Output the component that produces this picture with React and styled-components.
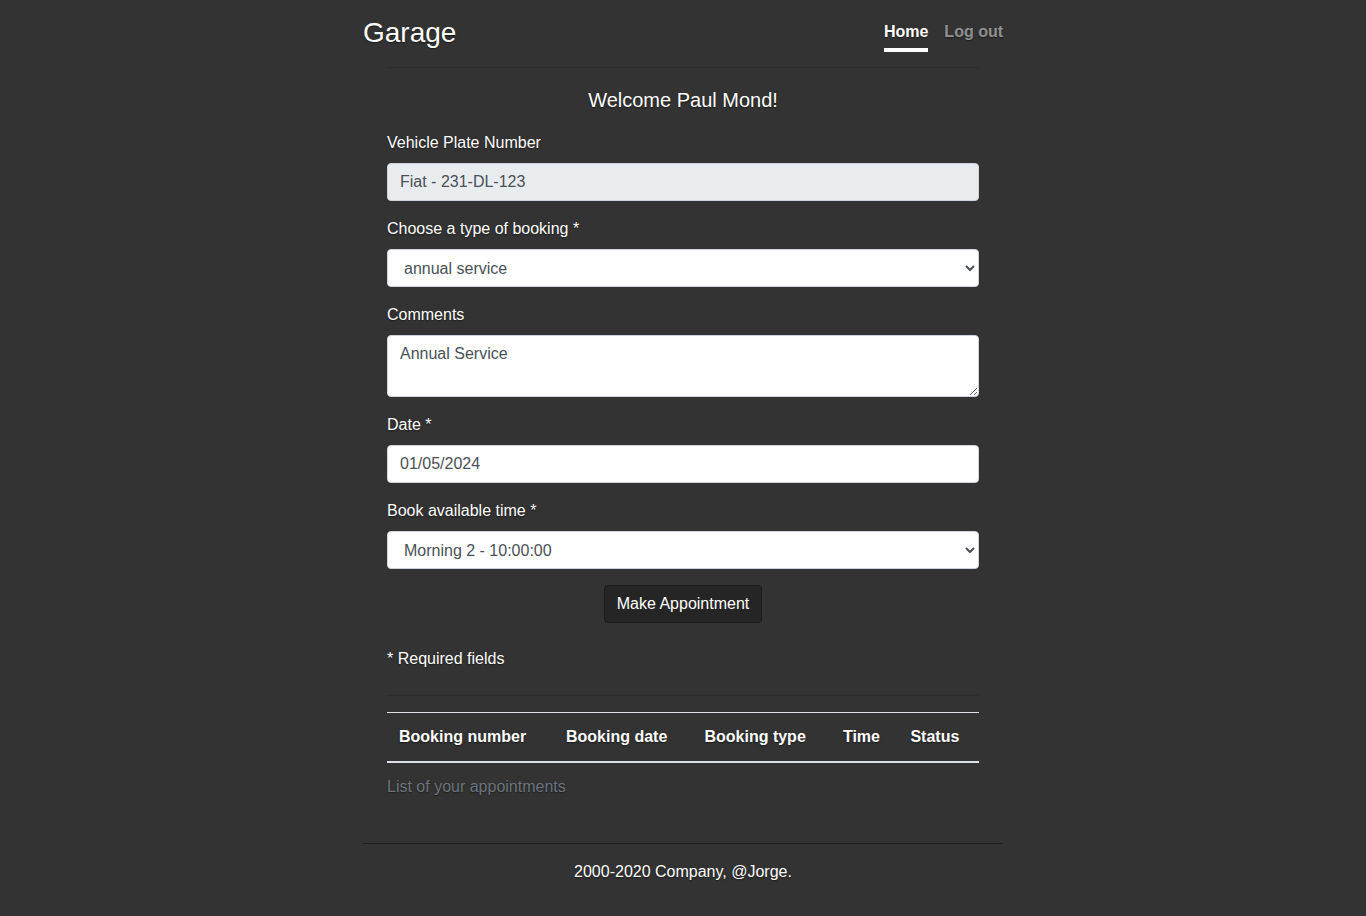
import React, { useState } from "react";
import styled, { createGlobalStyle } from "styled-components";

const GlobalStyle = createGlobalStyle`
  html, body {
    height: 100%;
  }
  body {
    margin: 0;
    background: #333;
    color: #fff;
    font-family: "Liberation Sans", Arial, sans-serif;
    font-size: 16px;
    line-height: 1.5;
    text-shadow: 0 0.05rem 0.1rem rgba(0, 0, 0, 0.5);
  }
  * {
    box-sizing: border-box;
  }
`;

const Cover = styled.div`
  display: flex;
  flex-direction: column;
  max-width: 640px;
  min-height: 100vh;
  margin: 0 auto;
  padding: 16px 0;
`;

const Masthead = styled.header`
  display: flex;
  justify-content: space-between;
  align-items: flex-start;
`;

const Brand = styled.h3`
  margin: 0;
  font-size: 28px;
  font-weight: 400;
  line-height: 1.2;
`;

const Nav = styled.nav`
  display: flex;
`;

const NavLink = styled.a`
  margin-left: 16px;
  padding: 4px 0;
  font-weight: 700;
  text-decoration: none;
  cursor: pointer;
  color: ${props => (props.$active ? "#fff" : "rgba(255, 255, 255, 0.5)")};
  border-bottom: 4px solid ${props => (props.$active ? "#fff" : "transparent")};
`;

const Main = styled.main`
  padding: 0 24px;
`;

const Rule = styled.hr`
  margin: ${props => props.$margin || "16px 0"};
  border: 0;
  border-top: 1px solid rgba(0, 0, 0, 0.1);
`;

const Welcome = styled.h5`
  margin: 20px 0 19px;
  font-size: 20px;
  font-weight: 400;
  line-height: 24px;
  text-align: center;
`;

const FormGroup = styled.div`
  margin-bottom: 16px;
`;

const Label = styled.label`
  display: block;
  margin-bottom: 8px;
`;

const controlStyles = `
  display: block;
  width: 100%;
  padding: 6px 12px;
  font-family: "Liberation Sans", Arial, sans-serif;
  font-size: 16px;
  line-height: 1.5;
  color: #495057;
  background: #fff;
  border: 1px solid #ced4da;
  border-radius: 4px;
  outline: none;
`;

const Input = styled.input`
  ${controlStyles}
  height: 38px;
  background: ${props => (props.readOnly ? "#e9ecef" : "#fff")};
`;

const Select = styled.select`
  ${controlStyles}
  height: 38px;
`;

const TextArea = styled.textarea`
  ${controlStyles}
  resize: vertical;
`;

const ButtonRow = styled.div`
  display: flex;
  justify-content: center;
  margin-bottom: 24px;
`;

const Button = styled.button`
  padding: 6px 12px;
  font-family: "Liberation Sans", Arial, sans-serif;
  font-size: 16px;
  line-height: 1.5;
  color: #fff;
  background: #252525;
  border: 1px solid #1b1b1b;
  border-radius: 4px;
  cursor: pointer;
`;

const Note = styled.p`
  margin: 0 0 24px;
`;

const Table = styled.table`
  width: 100%;
  border-collapse: collapse;
  margin-bottom: 16px;
`;

const Caption = styled.caption`
  caption-side: bottom;
  padding: 12px 0;
  color: #6c757d;
  text-align: left;
`;

const Th = styled.th`
  padding: 12px;
  text-align: left;
  vertical-align: bottom;
  border-top: 1px solid #dee2e6;
  border-bottom: 2px solid #dee2e6;
`;

const Footer = styled.footer`
  margin-top: auto;
  padding: 16px 0 16px;
  border-top: 1px solid #1f1f1f;
  text-align: center;
`;

const FooterText = styled.p`
  margin: 0;
`;

const columns = ["Booking number", "Booking date", "Booking type", "Time", "Status"];

const App = () => {
  const [booking, setBooking] = useState("annual service");
  const [comments, setComments] = useState("Annual Service");
  const [date, setDate] = useState("01/05/2024");
  const [time, setTime] = useState("Morning 2 - 10:00:00");

  return (
    <>
      <GlobalStyle />
      <Cover>
        <Masthead>
          <Brand>Garage</Brand>
          <Nav>
            <NavLink $active>Home</NavLink>
            <NavLink>Log out</NavLink>
          </Nav>
        </Masthead>

        <Main>
          <Rule $margin="15px 0 0" />
          <Welcome>Welcome Paul Mond!</Welcome>

          <form onSubmit={e => e.preventDefault()}>
            <FormGroup>
              <Label>Vehicle Plate Number</Label>
              <Input readOnly value="Fiat - 231-DL-123" />
            </FormGroup>
            <FormGroup>
              <Label>Choose a type of booking *</Label>
              <Select value={booking} onChange={e => setBooking(e.target.value)}>
                <option>annual service</option>
                <option>major service</option>
                <option>repair / fault</option>
                <option>major repair</option>
              </Select>
            </FormGroup>
            <FormGroup>
              <Label>Comments</Label>
              <TextArea rows={2} value={comments} onChange={e => setComments(e.target.value)} />
            </FormGroup>
            <FormGroup>
              <Label>Date *</Label>
              <Input value={date} onChange={e => setDate(e.target.value)} />
            </FormGroup>
            <FormGroup>
              <Label>Book available time *</Label>
              <Select value={time} onChange={e => setTime(e.target.value)}>
                <option>Morning 1 - 08:00:00</option>
                <option>Morning 2 - 10:00:00</option>
                <option>Afternoon 1 - 13:00:00</option>
                <option>Afternoon 2 - 15:00:00</option>
              </Select>
            </FormGroup>
            <ButtonRow>
              <Button type="submit">Make Appointment</Button>
            </ButtonRow>
          </form>

          <Note>* Required fields</Note>
          <Rule $margin="0 0 16px" />

          <Table>
            <Caption>List of your appointments</Caption>
            <thead>
              <tr>
                {columns.map(col => (
                  <Th key={col}>{col}</Th>
                ))}
              </tr>
            </thead>
            <tbody></tbody>
          </Table>
        </Main>

        <Footer>
          <FooterText>2000-2020 Company, @Jorge.</FooterText>
        </Footer>
      </Cover>
    </>
  );
};

export default App;
